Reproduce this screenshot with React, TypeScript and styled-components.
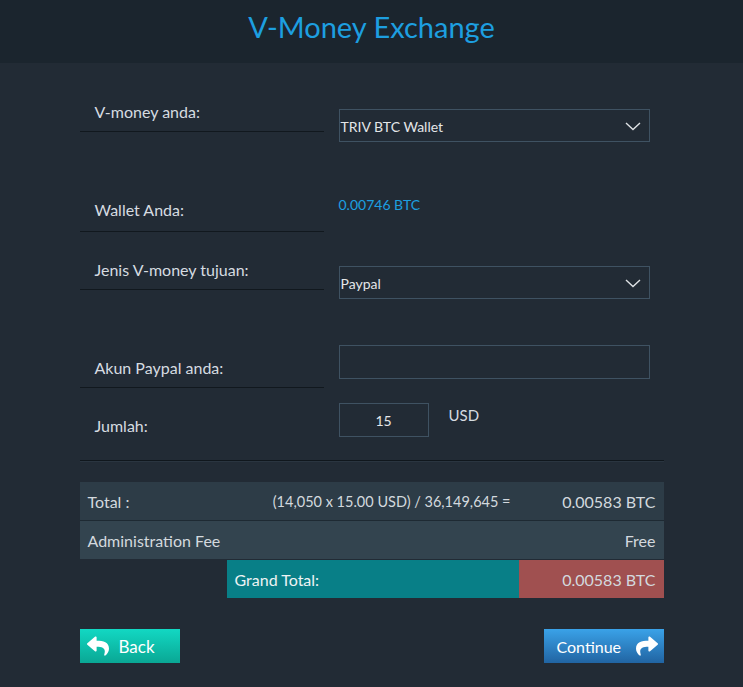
import React from "react";
import styled, { createGlobalStyle } from "styled-components";
import { FaReply, FaShare } from "react-icons/fa";

const GlobalStyle = createGlobalStyle`
  html, body { margin: 0; padding: 0; background: #222b35; }
  body { font-family: Lato, "Open Sans", sans-serif; color: #d6dce1; }
  * { box-sizing: border-box; }
`;

const Page = styled.div`
  min-height: 687px;
  background: #222b35;
`;

const Header = styled.header`
  height: 63px;
  background: #1b252e;
  padding-top: 10px;
  text-align: center;
`;

const Title = styled.h1`
  margin: 0;
  font-size: 29px;
  line-height: 34px;
  font-weight: 400;
  color: #1d9fe0;
`;

const Content = styled.main`
  width: 584px;
  margin: 0 auto;
  padding-top: 31px;
`;

const Row = styled.div<{ $h: number }>`
  display: flex;
  height: ${(p) => p.$h}px;
`;

const LabelCell = styled.div<{ $pb?: number; $noBorder?: boolean }>`
  width: 244px;
  flex: none;
  display: flex;
  align-items: flex-end;
  padding: 0 0 ${(p) => p.$pb ?? 9}px 15px;
  border-bottom: ${(p) => (p.$noBorder ? "none" : "1px solid #11181e")};
  font-size: 16px;
  line-height: 20px;
  color: #d6dce1;
`;

const Control = styled.div<{ $top: number }>`
  margin-left: 15px;
  margin-top: ${(p) => p.$top}px;
  align-self: flex-start;
  display: flex;
  align-items: flex-start;
`;

const SelectBox = styled.div`
  width: 311px;
  height: 33px;
  border: 1px solid #3f5262;
  display: flex;
  align-items: center;
  justify-content: space-between;
  padding: 2px 8px 0 1px;
  font-size: 14px;
  color: #e4e6e8;
`;

const TextInput = styled.div<{ $w: number }>`
  width: ${(p) => p.$w}px;
  height: 34px;
  border: 1px solid #3f5262;
  display: flex;
  align-items: center;
  justify-content: center;
  font-size: 14px;
  color: #e4e6e8;
  padding-top: 1px;
`;

const WalletValue = styled.div`
  font-size: 14px;
  line-height: 20px;
  color: #1d9fe0;
`;

const Unit = styled.div`
  margin-left: 20px;
  margin-top: 2px;
  font-size: 15px;
  line-height: 20px;
  color: #d6dce1;
`;

const Divider = styled.div`
  margin-top: 22px;
  height: 2px;
  border-top: 1px solid #10171d;
  border-bottom: 1px solid #2a3540;
`;

const Table = styled.div`
  margin-top: 20px;
  display: flex;
  flex-direction: column;
`;

const TRow = styled.div<{ $bg?: string; $border?: boolean }>`
  display: grid;
  grid-template-columns: 147px 292px 145px;
  height: ${(p) => (p.$border ? 39 : 38)}px;
  background: ${(p) => p.$bg ?? "transparent"};
  border-bottom: ${(p) => (p.$border ? "1px solid #1e2a33" : "none")};
  margin-bottom: ${(p) => (p.$border ? 0 : 1)}px;
  font-size: 16px;
  color: #d3d9de;
`;

const TCell = styled.div<{
  $align?: "left" | "right";
  $bg?: string;
  $span?: number;
  $size?: number;
  $color?: string;
}>`
  display: flex;
  align-items: center;
  justify-content: ${(p) => (p.$align === "right" ? "flex-end" : "flex-start")};
  padding: 0 8px;
  white-space: nowrap;
  background: ${(p) => p.$bg ?? "transparent"};
  grid-column: ${(p) => (p.$span ? `span ${p.$span}` : "auto")};
  font-size: ${(p) => p.$size ?? 16}px;
  color: ${(p) => p.$color ?? "inherit"};
`;

const Buttons = styled.div`
  margin-top: 30px;
  display: flex;
  justify-content: space-between;
`;

const Button = styled.button<{ $variant: "back" | "next" }>`
  height: 34px;
  width: ${(p) => (p.$variant === "back" ? 100 : 120)}px;
  border: none;
  border-radius: 0;
  display: flex;
  align-items: center;
  gap: ${(p) => (p.$variant === "back" ? 10 : 15)}px;
  padding: ${(p) => (p.$variant === "back" ? "0 0 0 7px" : "0 0 0 13px")};
  font-family: Lato, "Open Sans", sans-serif;
  font-size: ${(p) => (p.$variant === "back" ? 17 : 16)}px;
  color: #ffffff;
  cursor: pointer;
  background: ${(p) =>
    p.$variant === "back"
      ? "linear-gradient(#12d8c3, #0aa794)"
      : "linear-gradient(#3aa2e8, #2164a2)"};
  svg {
    flex: none;
  }
`;

const Chevron = () => (
  <svg width="16" height="9" viewBox="0 0 16 9" fill="none">
    <path d="M1 1 L8 7.5 L15 1" stroke="#dfe2e5" strokeWidth="1.4" />
  </svg>
);

export default function App() {
  return (
    <Page>
      <GlobalStyle />
      <Header>
        <Title>V-Money Exchange</Title>
      </Header>
      <Content>
        <Row $h={38}>
          <LabelCell>V-money anda:</LabelCell>
          <Control $top={15}>
            <SelectBox>
              <span>TRIV BTC Wallet</span>
              <Chevron />
            </SelectBox>
          </Control>
        </Row>
        <Row $h={100}>
          <LabelCell $pb={11}>Wallet Anda:</LabelCell>
          <Control $top={63}>
            <WalletValue>0.00746 BTC</WalletValue>
          </Control>
        </Row>
        <Row $h={58}>
          <LabelCell>Jenis V-money tujuan:</LabelCell>
          <Control $top={34}>
            <SelectBox>
              <span>Paypal</span>
              <Chevron />
            </SelectBox>
          </Control>
        </Row>
        <Row $h={98}>
          <LabelCell>Akun Paypal anda:</LabelCell>
          <Control $top={55}>
            <TextInput $w={311} />
          </Control>
        </Row>
        <Row $h={50}>
          <LabelCell $noBorder $pb={2}>Jumlah:</LabelCell>
          <Control $top={15}>
            <TextInput $w={90}>15</TextInput>
            <Unit>USD</Unit>
          </Control>
        </Row>
        <Divider />
        <Table>
          <TRow $bg="#2d3c47" $border>
            <TCell>Total :</TCell>
            <TCell $align="right" $size={14.5}>(14,050 x 15.00 USD) / 36,149,645 =</TCell>
            <TCell $align="right">0.00583 BTC</TCell>
          </TRow>
          <TRow $bg="#33444f">
            <TCell $span={2}>Administration Fee</TCell>
            <TCell $align="right">Free</TCell>
          </TRow>
          <TRow>
            <TCell />
            <TCell $bg="#087f87" $color="#eef3f4">Grand Total:</TCell>
            <TCell $align="right" $bg="#a05050">0.00583 BTC</TCell>
          </TRow>
        </Table>
        <Buttons>
          <Button $variant="back">
            <FaReply size={22} />
            Back
          </Button>
          <Button $variant="next">
            Continue
            <FaShare size={22} />
          </Button>
        </Buttons>
      </Content>
    </Page>
  );
}
